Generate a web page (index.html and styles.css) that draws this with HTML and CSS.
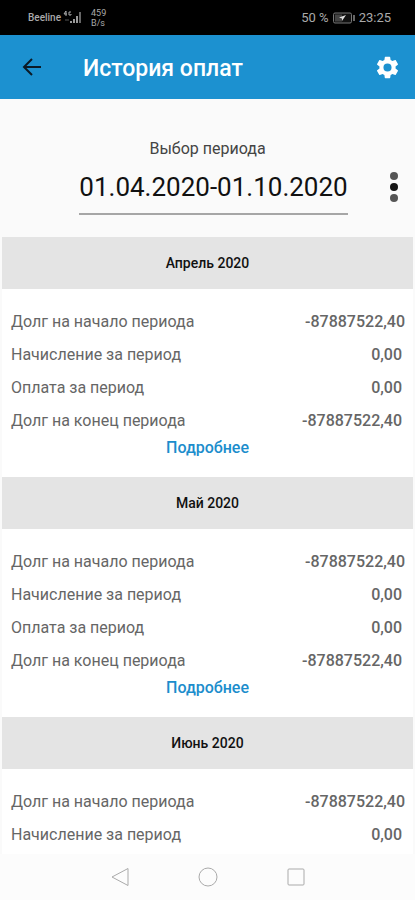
FILE: index.html
```html
<!DOCTYPE html>
<html lang="ru">
<head>
<meta charset="utf-8">
<meta name="viewport" content="width=device-width, initial-scale=1">
<title>История оплат</title>
<link rel="stylesheet" href="styles.css">
</head>
<body>
<div class="status">
  <span class="carrier">Beeline</span>
  <svg class="signal" width="20" height="16" viewBox="0 0 20 16" aria-hidden="true">
    <path d="M3 1 1 4h3M3 1v5M8 2H6v3h2V4" fill="none" stroke="#aaa" stroke-width="1"/>
    <path d="M2 10h4" stroke="#555" stroke-width="1"/>
    <path d="M7 13v-2h2v2zM10 13v-4h2v4zM13 13V6h2v7z" fill="#999"/>
    <path d="M16 13V2h2v11z" fill="#666"/>
  </svg>
  <span class="speed"><span>459</span><span>B/s</span></span>
  <span class="percent">50 %</span>
  <svg class="battery" width="24" height="12" viewBox="0 0 24 12" aria-hidden="true">
    <rect x="1.5" y="1" width="18" height="10" rx="1.5" fill="#111" stroke="#777"/>
    <path d="M3 2.500h7v7H3z" fill="#444"/>
    <path d="M22 3v6" stroke="#888" stroke-width="1.500"/>
    <path d="m14 3-7 2.500 3 1V9z" fill="#ddd"/>
  </svg>
  <span class="clock">23:25</span>
</div>
<header class="bar">
  <button class="icon-button" type="button" aria-label="Назад">
    <svg width="20" height="20" viewBox="0 0 20 20"><path d="M19 10H2M10 2l-8 8 8 8" fill="none" stroke="#0b1a26" stroke-width="2"/></svg>
  </button>
  <h1>История оплат</h1>
  <button class="icon-button" type="button" aria-label="Настройки">
    <svg width="27" height="27" viewBox="0 0 24 24"><path fill="#fff" d="M19.140 12.940c.04-.3.060-.61.060-.94s-.02-.64-.07-.94l2.030-1.580c.18-.14.230-.41.120-.61l-1.920-3.320c-.12-.22-.37-.29-.59-.22l-2.390.960c-.5-.38-1.030-.7-1.620-.94l-.36-2.540c-.04-.24-.24-.41-.48-.41h-3.840c-.24 0-.43.170-.47.410l-.36 2.540c-.59.240-1.130.570-1.620.940l-2.390-.96c-.22-.08-.47 0-.59.220L2.740 8.870c-.12.210-.08.470.120.610l2.030 1.580c-.05.300-.09.630-.09.940s.02.640.070.940l-2.030 1.580c-.18.140-.23.410-.12.610l1.920 3.320c.12.220.37.290.59.220l2.390-.96c.5.380 1.030.700 1.620.940l.36 2.540c.05.240.24.410.48.410h3.840c.24 0 .44-.17.470-.41l.36-2.540c.59-.24 1.130-.56 1.620-.94l2.390.960c.22.080.470 0 .59-.22l1.920-3.320c.12-.22.070-.47-.12-.61zM12 15.600a3.600 3.600 0 1 1 0-7.200 3.600 3.600 0 0 1 0 7.200z"/></svg>
  </button>
</header>
<section class="period">
  <button class="range" type="button">
    <span class="range-label">Выбор периода</span>
    <span class="range-value">01.04.2020-01.10.2020</span>
  </button>
  <button class="menu" type="button" aria-label="Меню">
    <svg width="10" height="32" viewBox="0 0 10 32"><circle cx="5" cy="5" r="4" fill="#555"/><circle cx="5" cy="16" r="4" fill="#151515"/><circle cx="5" cy="27" r="4" fill="#555"/></svg>
  </button>
</section>
<main class="list">
  <section class="month">
    <h2>Апрель 2020</h2>
    <table>
      <tr class="opening"><th scope="row">Долг на начало периода</th><td>-87887522,40</td></tr>
      <tr><th scope="row">Начисление за период</th><td>0,00</td></tr>
      <tr><th scope="row">Оплата за период</th><td>0,00</td></tr>
      <tr><th scope="row">Долг на конец периода</th><td>-87887522,40</td></tr>
    </table>
    <a href="#april">Подробнее</a>
  </section>
  <section class="month">
    <h2>Май 2020</h2>
    <table>
      <tr class="opening"><th scope="row">Долг на начало периода</th><td>-87887522,40</td></tr>
      <tr><th scope="row">Начисление за период</th><td>0,00</td></tr>
      <tr><th scope="row">Оплата за период</th><td>0,00</td></tr>
      <tr><th scope="row">Долг на конец периода</th><td>-87887522,40</td></tr>
    </table>
    <a href="#may">Подробнее</a>
  </section>
  <section class="month">
    <h2>Июнь 2020</h2>
    <table>
      <tr class="opening"><th scope="row">Долг на начало периода</th><td>-87887522,40</td></tr>
      <tr><th scope="row">Начисление за период</th><td>0,00</td></tr>
    </table>
  </section>
</main>
<nav class="system" aria-label="Системная навигация">
  <button type="button" aria-label="Назад"><svg width="20" height="20" viewBox="0 0 20 20"><path d="M18 1.500v17L2 10z"/></svg></button>
  <button type="button" aria-label="Домой"><svg width="20" height="20" viewBox="0 0 20 20"><circle cx="10" cy="10" r="9"/></svg></button>
  <button type="button" aria-label="Недавние"><svg width="20" height="20" viewBox="0 0 20 20"><rect x="2" y="2" width="16" height="16" rx="1"/></svg></button>
</nav>
</body>
</html>
```
FILE: styles.css
```css
* {
  box-sizing: border-box;
}

body {
  margin: 0;
  min-height: 100vh;
  display: flex;
  flex-direction: column;
  background: #fafafa;
  color: #111;
  font-family: Roboto, "Noto Sans", sans-serif;
}

button {
  padding: 0;
  border: 0;
  background: none;
  color: inherit;
  font: inherit;
}

svg {
  display: block;
}

.status {
  display: flex;
  align-items: center;
  height: 35px;
  padding: 0 24px 0 28px;
  background: #000;
  color: #aaa;
}

.carrier {
  font-size: 10px;
  font-weight: 500;
}

.signal {
  margin: 0 8px 0 2px;
}

.speed {
  display: flex;
  flex-direction: column;
  font-size: 9px;
  line-height: 10px;
}

.percent {
  margin-left: auto;
  font-size: 13px;
}

.battery {
  margin: 0 3px;
}

.clock {
  font-size: 13px;
}

.bar {
  display: flex;
  align-items: center;
  height: 64px;
  padding: 0 12px 0 16px;
  background: #1c91d0;
}

.icon-button {
  display: grid;
  place-items: center;
  width: 32px;
  height: 32px;
}

.bar h1 {
  flex: 1;
  margin: 0;
  padding: 2px 0 0 35px;
  color: #fff;
  font-size: 23px;
  font-weight: 500;
}

.period {
  display: grid;
  grid-template-columns: 1fr auto 1fr;
  align-items: end;
  height: 138px;
  padding: 0 16px 22px 28px;
}

.range {
  grid-column: 2;
  display: flex;
  flex-direction: column;
  text-align: center;
  border-bottom: 2px solid #a6a6a6;
}

.range-label {
  padding-right: 12px;
  color: #444;
  font-size: 16px;
  line-height: 24px;
}

.range-value {
  padding: 6px 0;
  font-size: 26px;
  line-height: 40px;
}

.menu {
  justify-self: end;
  margin-bottom: 12px;
}

.list {
  flex: 1;
  margin: 0 2px;
  background: #fff;
}

.month {
  text-align: center;
}

.month h2 {
  margin: 0 0 16px;
  background: #e4e4e4;
  font-size: 14px;
  font-weight: 500;
  line-height: 52px;
}

.month table {
  width: 100%;
  border-collapse: collapse;
  color: #666;
  font-size: 16px;
  line-height: 33px;
}

.month th {
  padding: 0 0 0 9px;
  font-weight: 400;
  text-align: left;
}

.month td {
  padding: 0 11px 0 0;
  font-weight: 500;
  text-align: right;
}

.month .opening td {
  padding-right: 8px;
}

.month a {
  display: inline-block;
  margin-bottom: 18px;
  color: #1c8dcc;
  font-size: 16px;
  font-weight: 500;
  line-height: 22px;
  text-decoration: none;
  vertical-align: top;
}

.system {
  display: flex;
  align-items: center;
  justify-content: center;
  gap: 68px;
  height: 46px;
  background: #fcfcfc;
}

.system svg {
  fill: none;
  stroke: #aaa;
  stroke-width: 1;
}
```
